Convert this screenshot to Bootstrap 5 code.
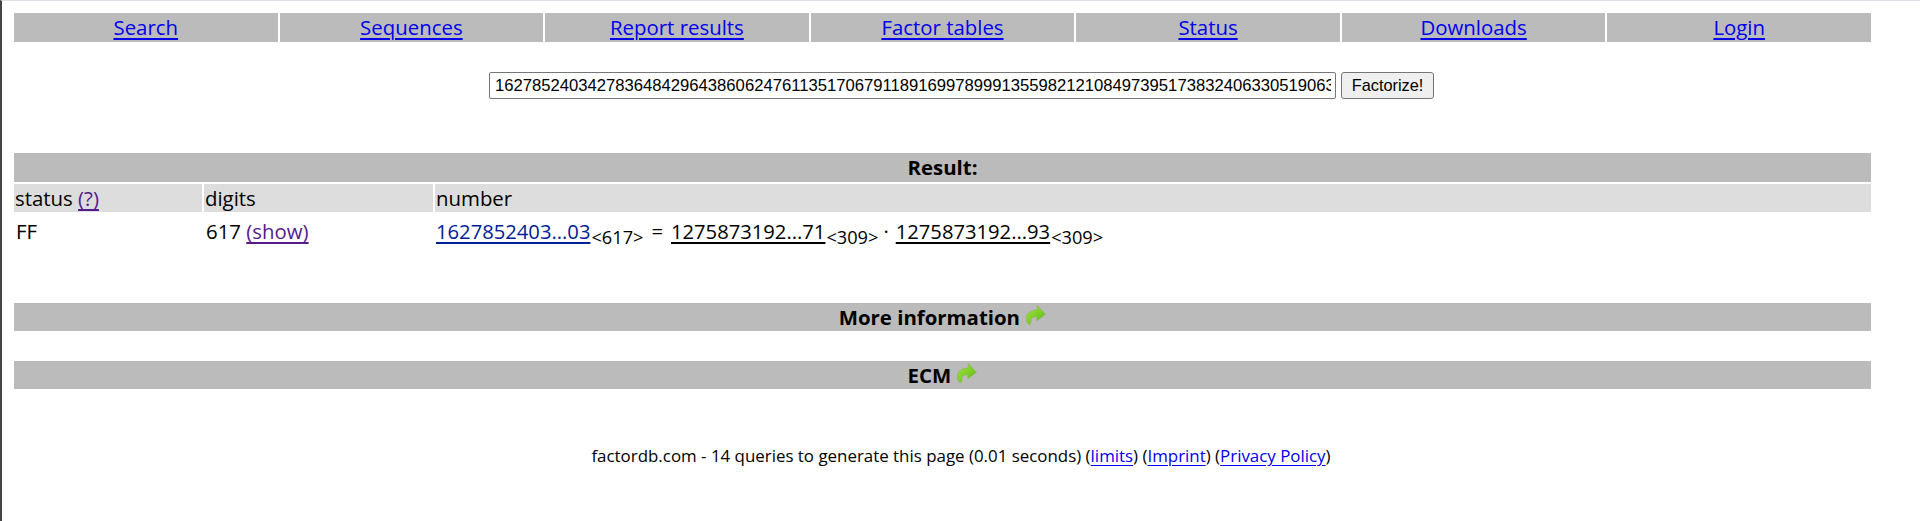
<!DOCTYPE html>
<html lang="en">
<head>
    <meta charset="UTF-8">
    <meta name="viewport" content="width=device-width, initial-scale=1.0">
    <title>factordb.com</title>
    <link href="https://cdn.jsdelivr.net/npm/bootstrap@5.3.3/dist/css/bootstrap.min.css" rel="stylesheet">
    <style>
        html, body { height: 100%; }
        body {
            font-family: "Open Sans", "Noto Sans", sans-serif;
            font-size: 20.4px;
            line-height: 1.2;
            color: #000;
            background: #fff;
            border-top: 1px solid #dcdee3;
            border-left: 2px solid #444;
            overflow: hidden;
        }
        a { color: #00e; text-underline-offset: 3px; }
        .page-wrap { width: 1857px; margin-left: 12px; padding-top: 12px; }
        .top-links { display: grid; grid-template-columns: repeat(7, 1fr); gap: 2px; }
        .top-links > div { background: #bbb; height: 29px; line-height: 29px; text-align: center; }
        .search-row { width: 1919px; margin-left: -12px; height: 27px; margin-top: 30px; gap: 5px; }
        .num-input {
            width: 847px; height: 27px; padding: 1px 4px 1px 5px; font: 16.65px "Liberation Sans", Arial, sans-serif;
            border: 1px solid #767676; border-radius: 2px; color: #000;
        }
        .go-btn {
            width: 93px; height: 27px; padding: 0; font: 16.33px "Liberation Sans", Arial, sans-serif;
            background: #efefef; border: 1px solid #767676; border-radius: 3px; color: #000;
        }
        .bar { background: #bbb; height: 28px; line-height: 28px; text-align: center; font-weight: 700; }
        .result-bar { margin-top: 54px; height: 29px; line-height: 29px; }
        .result-grid { display: grid; grid-template-columns: 188px 229px 1fr; column-gap: 2px; margin-top: 2px; }
        .result-grid > .head { background: #ddd; height: 28px; line-height: 28px; padding-left: 1px; }
        .result-grid > .cell { height: 67px; padding: 7px 2px 0; white-space: nowrap; }
        .result-grid > .num-cell { padding-left: 1px; font-size: 20.2px; }
        .result-grid a.seen { color: #551a8b; }
        .result-grid a.num { color: #002099; }
        .result-grid a.fact { color: #000; }
        .result-grid sub { font-size: 18.2px; bottom: -.25em; margin-left: 1px; }
        .eq-sign { margin: 0 8px 0 8px; }
        .dot-sign { margin: 0 7px 0 5px; }
        .ecm-bar { margin-top: 30px; }
        .arrow { width: 20px; height: 20px; vertical-align: 0; margin-left: 1px; }
        .foot-line { width: 1918px; margin-left: -12px; margin-top: 57px; font-size: 16.9px; text-align: center; }
    </style>
</head>
<body>
    <svg width="0" height="0" class="position-absolute">
        <defs>
            <linearGradient id="arrowFill" x1="0" y1="0" x2="1" y2="1">
                <stop offset="0" stop-color="#a8e048"/>
                <stop offset=".6" stop-color="#76cc22"/>
                <stop offset="1" stop-color="#58a81a"/>
            </linearGradient>
            <symbol id="goArrow" viewBox="0 0 20 20">
                <path d="M11.3 .4L19.4 9.3 10.8 15.8V11.7C7 11.5 4.5 13 5 16 5.2 18 4.5 19.4 3.3 19.8 .7 18 -.1 15 .4 12 1.2 7.5 6 5 11.3 5z" fill="url(#arrowFill)" stroke="#8fb45e" stroke-width=".7"/>
            </symbol>
        </defs>
    </svg>
    <div class="page-wrap">
        <!-- top navigation -->
        <div class="top-links">
            <div><a href="#">Search</a></div>
            <div><a href="#">Sequences</a></div>
            <div><a href="#">Report results</a></div>
            <div><a href="#">Factor tables</a></div>
            <div><a href="#">Status</a></div>
            <div><a href="#">Downloads</a></div>
            <div><a href="#">Login</a></div>
        </div>

        <!-- search form -->
        <form class="search-row d-flex justify-content-center align-items-center">
            <input class="num-input" type="text" value="16278524034278364842964386062476113517067911891699789991355982121084973951738324063305190631234567890">
            <button class="go-btn" type="button">Factorize!</button>
        </form>

        <!-- result table -->
        <div class="bar result-bar">Result:</div>
        <div class="result-grid">
            <div class="head">status <a class="seen" href="#">(?)</a></div>
            <div class="head">digits</div>
            <div class="head">number</div>
            <div class="cell">FF</div>
            <div class="cell">617 <a class="seen" href="#">(show)</a></div>
            <div class="cell num-cell"><a class="num" href="#">1627852403...03</a><sub>&lt;617&gt;</sub><span class="eq-sign">=</span><a class="fact" href="#">1275873192...71</a><sub>&lt;309&gt;</sub><span class="dot-sign">&middot;</span><a class="fact" href="#">1275873192...93</a><sub>&lt;309&gt;</sub></div>
        </div>

        <div class="bar mt-4">More information <svg class="arrow"><use href="#goArrow"/></svg></div>
        <div class="bar ecm-bar">ECM <svg class="arrow"><use href="#goArrow"/></svg></div>

        <div class="foot-line">factordb.com - 14 queries to generate this page (0.01 seconds) (<a href="#">limits</a>) (<a href="#">Imprint</a>) (<a href="#">Privacy Policy</a>)</div>
    </div>
    <script src="https://cdn.jsdelivr.net/npm/bootstrap@5.3.3/dist/js/bootstrap.bundle.min.js"></script>
</body>
</html>
